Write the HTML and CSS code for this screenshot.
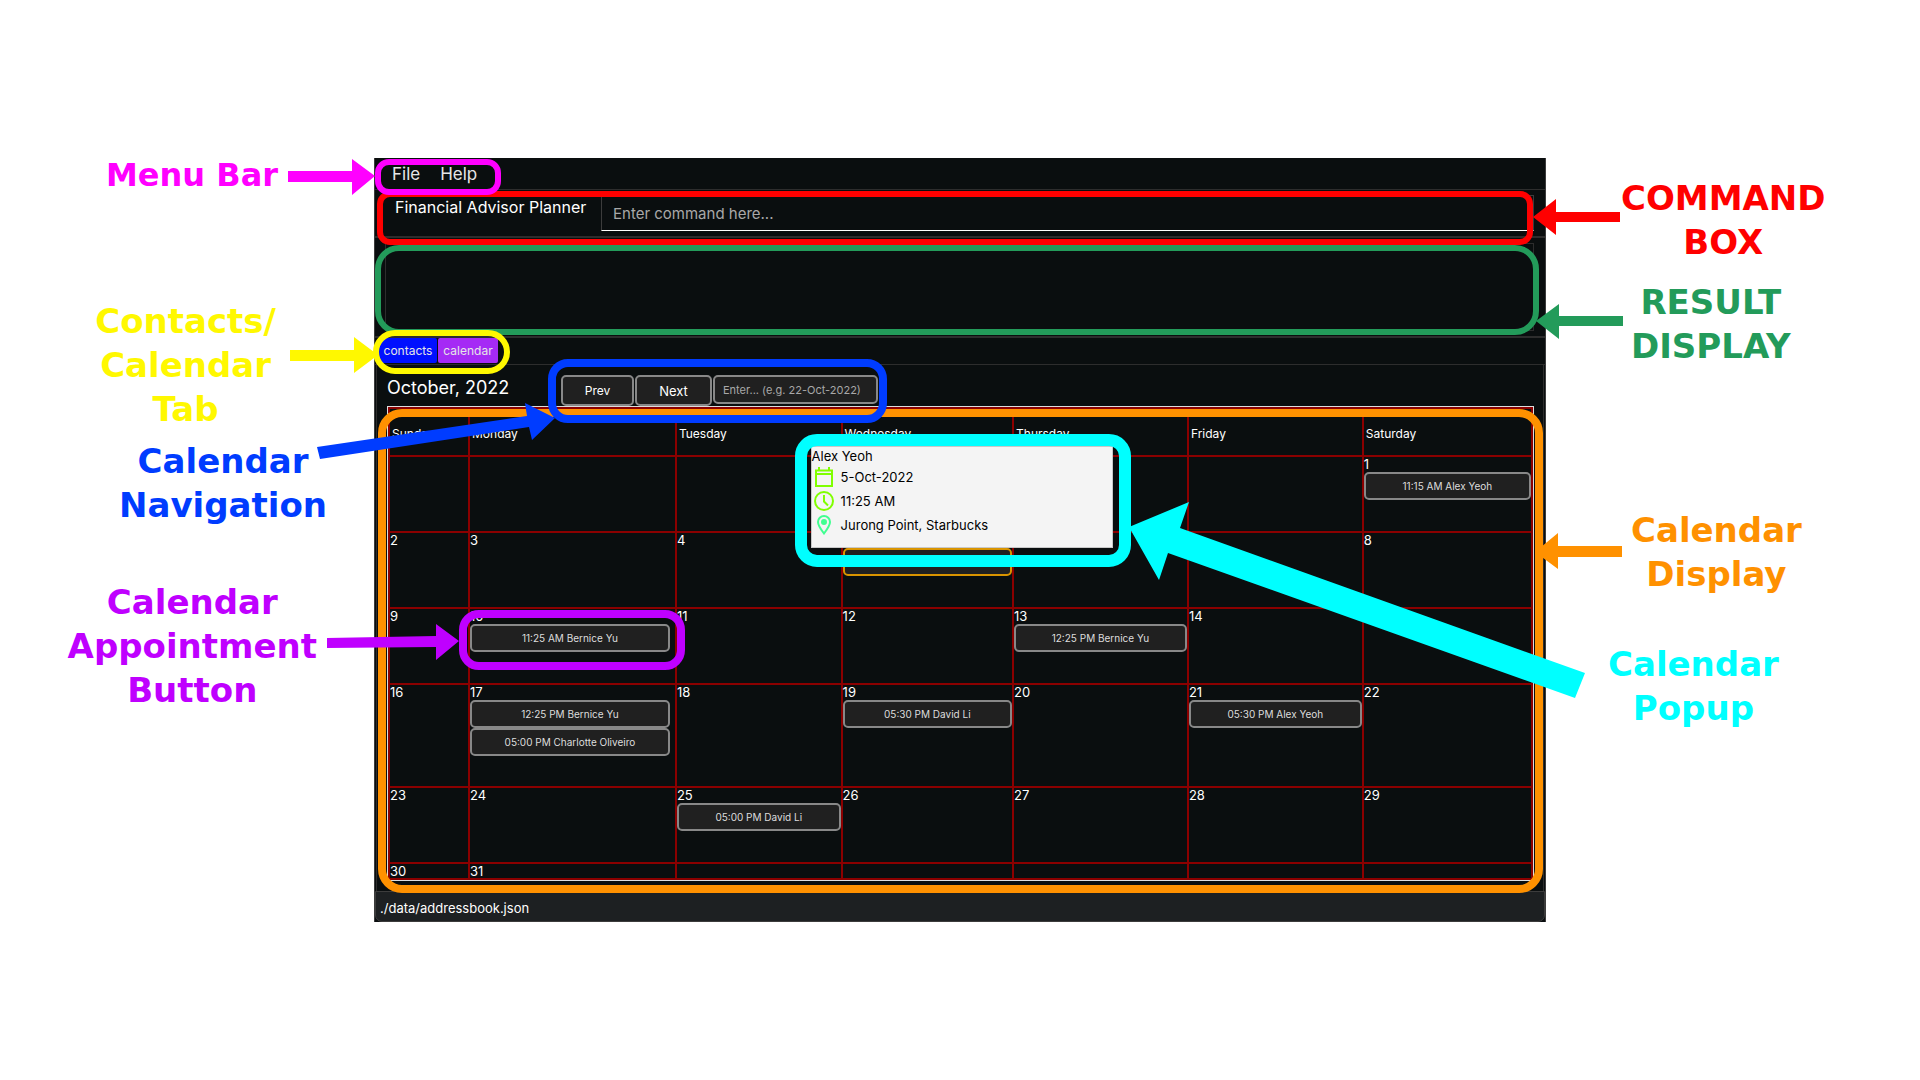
FILE: index.html
```html
<!DOCTYPE html>
<html lang="en">
<head>
<meta charset="utf-8">
<title>Financial Advisor Planner</title>
<link rel="stylesheet" href="styles.css">
</head>
<body>
<div class="guide">
  <aside class="notes notes-left">
    <p class="note menu-note">Menu Bar</p>
    <p class="note tab-note">Contacts/<br>Calendar<br>Tab</p>
    <p class="note nav-note">Calendar<br>Navigation</p>
    <p class="note appt-note">Calendar<br>Appointment<br>Button</p>
  </aside>

  <main class="window">
    <nav class="menubar">
      <div class="menus">
        <button type="button">File</button>
        <button type="button">Help</button>
        <span class="ring menu-ring"></span>
      </div>
    </nav>
    <form class="command">
      <label for="command">Financial Advisor Planner</label>
      <input id="command" type="text" placeholder="Enter command here...">
      <span class="ring command-ring"></span>
    </form>
    <section class="result">
      <output class="result-box"></output>
      <span class="ring result-ring"></span>
    </section>
    <div class="tabs">
      <button type="button" class="tab contacts">contacts</button>
      <button type="button" class="tab calendar">calendar</button>
      <span class="ring tab-ring"></span>
    </div>
    <section class="pane">
      <header class="month">
        <h1>October, 2022</h1>
        <div class="nav">
          <button type="button" class="prev">Prev</button>
          <button type="button" class="next">Next</button>
          <input type="text" aria-label="Go to date" placeholder="Enter... (e.g. 22-Oct-2022)">
          <span class="ring nav-ring"></span>
        </div>
      </header>
      <div class="board">
        <table>
          <colgroup><col class="sun"><col class="mon"><col class="tue"><col class="wed"><col class="thu"><col class="fri"><col class="sat"></colgroup>
          <thead>
            <tr><th>Sunday</th><th>Monday</th><th>Tuesday</th><th>Wednesday</th><th>Thursday</th><th>Friday</th><th>Saturday</th></tr>
          </thead>
          <tbody>
            <tr class="week"><td></td><td></td><td></td><td></td><td></td><td></td><td>1<button type="button" class="appt">11:15 AM Alex Yeoh</button></td></tr>
            <tr class="week"><td>2</td><td>3</td><td>4</td>
              <td class="selected">5<button type="button" class="appt active" aria-label="Alex Yeoh appointment"></button>
                <div class="popup">
                  <div class="who">Alex Yeoh</div>
                  <div class="detail"><svg viewBox="0 0 20 20" stroke="#80ff00"><path d="M2 3.5h16V19H2zM2 7h16M5 0v4M15 0v4"/></svg>5-Oct-2022</div>
                  <div class="detail"><svg viewBox="0 0 20 20" stroke="#80ff00"><circle cx="10" cy="10" r="9"/><path d="M10 4v6.500l4 4"/></svg>11:25 AM</div>
                  <div class="detail"><svg viewBox="0 0 20 20" stroke="#40ff90"><path d="M10 18.500C6.500 14 4 10.500 4 7a6 6 0 0 1 12 0c0 3.500-2.500 7-6 11.500z"/><circle cx="10" cy="7" r="2" fill="#40ff90"/></svg>Jurong Point, Starbucks</div>
                  <span class="ring popup-ring"></span>
                </div>
              </td>
              <td>6</td><td>7</td><td>8</td></tr>
            <tr class="week"><td>9</td><td>10<div class="slot"><button type="button" class="appt">11:25 AM Bernice Yu</button><span class="ring appt-ring"></span></div></td><td>11</td><td>12</td><td>13<button type="button" class="appt">12:25 PM Bernice Yu</button></td><td>14</td><td>15</td></tr>
            <tr class="week tall"><td>16</td><td>17<div class="slot"><button type="button" class="appt">12:25 PM Bernice Yu</button><button type="button" class="appt">05:00 PM Charlotte Oliveiro</button></div></td><td>18</td><td>19<button type="button" class="appt">05:30 PM David Li</button></td><td>20</td><td>21<button type="button" class="appt">05:30 PM Alex Yeoh</button></td><td>22</td></tr>
            <tr class="week"><td>23</td><td>24</td><td>25<button type="button" class="appt">05:00 PM David Li</button></td><td>26</td><td>27</td><td>28</td><td>29</td></tr>
            <tr class="last"><td>30</td><td>31</td><td></td><td></td><td></td><td></td><td></td></tr>
          </tbody>
        </table>
        <span class="ring board-ring"></span>
      </div>
    </section>
    <footer class="status">./data/addressbook.json</footer>
  </main>

  <aside class="notes notes-right">
    <p class="note command-note">COMMAND<br>BOX</p>
    <p class="note result-note">RESULT<br>DISPLAY</p>
    <p class="note display-note">Calendar<br>Display</p>
    <p class="note popup-note">Calendar<br>Popup</p>
  </aside>

  <svg class="arrows arrows-left" viewBox="0 0 560 730" aria-hidden="true">
    <path fill="#ff00ff" d="M288 171H352V159L375 176L352 195V182H288z"/>
    <path fill="#fff800" d="M290 350H354V337L378 355L354 373V361H290z"/>
    <path fill="#003cff" d="M317 447L527 416L525 403L555 418L532 440L529 427L320 459z"/>
    <path fill="#bf00ff" d="M327 638L436 636V624L459 641L436 660V647L327 648z"/>
  </svg>
  <svg class="arrows arrows-right" viewBox="1120 0 800 730" aria-hidden="true">
    <path fill="#ff0000" d="M1620 212H1556V199L1533 217L1556 235V222H1620z"/>
    <path fill="#239b5a" d="M1623 316H1559V304L1536 321L1559 339V326H1623z"/>
    <path fill="#ff9100" d="M1622 546H1558V533L1535 552L1558 569V557H1622z"/>
    <path fill="#00ffff" d="M1129 527L1189 502L1180 528L1585 673L1575 698L1168 553L1159 580z"/>
  </svg>
</div>
</body>
</html>
```
FILE: styles.css
```css
* { box-sizing: border-box; }
body { margin: 0; background: #fff; font-family: Inter, "Liberation Sans", sans-serif; }
button, input { font-family: inherit; margin: 0; }

.guide {
  position: relative;
  display: grid;
  grid-template-columns: 374px 1fr 374px;
  align-items: start;
  min-height: 100vh;
}

/* Callout labels */
.notes { display: flex; flex-direction: column; }
.notes-left { align-items: flex-end; padding-top: 153px; }
.notes-right { align-items: flex-start; padding-top: 176px; }
.note {
  margin: 0;
  font: bold 34px/44px "DejaVu Sans", Verdana, sans-serif;
  text-align: center;
  white-space: nowrap;
}
.menu-note { color: #ff00ff; margin-right: 96px; font-size: 32px; }
.tab-note { color: #fff800; margin: 102px 98px 0 0; }
.nav-note { color: #003cff; margin: 8px 47px 0 0; }
.appt-note { color: #bf00ff; margin: 53px 57px 0 0; }
.command-note { color: #ff0000; margin-left: 75px; }
.result-note { color: #239b5a; margin: 16px 0 0 85px; }
.display-note { color: #ff9100; margin: 140px 0 0 85px; }
.popup-note { color: #00ffff; margin: 46px 0 0 62px; }

.arrows { position: absolute; top: 0; height: 730px; z-index: 10; pointer-events: none; }
.arrows-left { left: 0; width: 560px; }
.arrows-right { right: 0; width: 800px; }

/* Highlight rings */
.ring { position: absolute; border: 6px solid; pointer-events: none; }
.menu-ring { color: #ff00ff; inset: 1px auto auto 0; width: 126px; height: 36px; border-radius: 14px; z-index: 3; }
.command-ring { color: #ff0000; inset: 1px 12px -9px 2px; border-radius: 13px; z-index: 1; }
.result-ring { color: #239b5a; inset: 7px 6px 1px 0; border-radius: 24px; z-index: 2; }
.tab-ring { color: #fff800; top: -8px; left: -2px; width: 137px; height: 44px; border-radius: 22px; z-index: 3; }
.nav-ring { color: #003cff; inset: -16px -9px -17px -13px; border-width: 8px; border-radius: 20px; z-index: 3; }
.board-ring { color: #ff9100; inset: 2px -10px -13px -10px; border-width: 8px; border-radius: 24px; z-index: 2; }
.popup-ring { color: #00ffff; inset: -13px -19px -20px -17px; border-width: 12px; border-radius: 22px; }
.appt-ring { color: #bf00ff; inset: -14px -15px -18px -11px; border-width: 8px; border-radius: 20px; z-index: 3; }

/* Application window */
.window {
  margin-top: 158px;
  background: #0a0e0f;
  color: #fff;
  border: solid #3c3c3c;
  border-width: 0 1px;
}
.menubar { border-bottom: 1px solid #2d2d2d; }
.menus { position: relative; display: flex; gap: 20px; height: 31px; padding: 0 17px; }
.menus button { border: 0; padding: 0; background: none; color: #e6e6e6; font-size: 17px; line-height: 32px; }

.command {
  position: relative;
  display: flex;
  align-items: flex-start;
  gap: 10px;
  height: 48px;
  padding: 5px 11px 0 20px;
  border-bottom: 2px solid #2d2d2d;
}
.command label { font-size: 16px; line-height: 24px; width: 196px; white-space: nowrap; }
.command input {
  flex: 1;
  height: 36px;
  padding: 0 11px;
  border: 1px solid #3c3c3c;
  border-bottom-color: #fff;
  background: none;
  color: #fff;
  font-size: 15px;
}
.command input::placeholder { color: #a8a8a8; }

.result { position: relative; padding: 5px 11px 5px 10px; border-bottom: 2px solid #2d2d2d; }
.result-box { display: block; height: 88px; border: 1px solid #2d2d2d; }

.tabs { position: relative; display: flex; gap: 1px; padding: 0 4px 1px; border-bottom: 1px solid #2d2d2d; }
.tab { border: 0; padding: 0 2px; width: 58px; height: 25px; border-radius: 2px; color: #e6e6e6; font-size: 12px; }
.contacts { background: #0010ff; }
.calendar { background: #a52af5; width: 60px; }

.pane { padding: 10px 9px 10px 10px; margin: 0 1px; border: solid #2d2d2d; border-width: 0 1px; }
.month { display: flex; height: 31px; }
.month h1 { margin: 0; width: 174px; font-size: 18px; font-weight: 400; line-height: 25px; white-space: nowrap; }
.nav { position: relative; display: flex; align-items: flex-start; gap: 1px; }
.nav button, .nav input, .appt { border: 2px solid #888; border-radius: 5px; background: #202020; color: #fff; }
.nav button { height: 31px; padding: 0; font-size: 12px; }
.prev { width: 73px; }
.nav .next { width: 77px; font-size: 13px; }
.nav input { width: 165px; height: 29px; padding: 0 8px; font-size: 11px; }
.nav input::placeholder { color: #a8a8a8; }

/* Month grid */
.board { position: relative; border: 1px solid #ddd; }
table { width: 100%; table-layout: fixed; border-collapse: collapse; font-size: 13px; }
.sun { width: 7%; }
.mon { width: 18.1%; }
.tue { width: 14.5%; }
.wed { width: 15%; }
.thu, .fri { width: 15.3%; }
th, td { border: 2px solid #8b0000; padding: 0; text-align: left; vertical-align: top; line-height: 15px; }
th { height: 48px; padding: 2px 0 0 2px; vertical-align: middle; font-size: 12px; font-weight: 400; }
.week { height: 76px; }
.tall { height: 103px; }
.last { height: 16px; }
.last td { line-height: 14px; }
.selected, .slot { position: relative; }
.slot { width: calc(100% - 5px); }
.appt { display: block; width: 100%; height: 28px; padding: 0; color: #ddd; font-size: 10px; }
.active { border-color: #d99400; }

.popup {
  position: absolute;
  z-index: 4;
  top: -87px;
  left: -32px;
  width: 302px;
  height: 102px;
  border: 1px solid #c8c8c8;
  background: #f4f4f4;
  color: #000;
  font-size: 13px;
}
.who { line-height: 18px; }
.detail { display: flex; align-items: center; gap: 7px; height: 24px; padding-left: 2px; }
.detail svg { width: 20px; height: 20px; fill: none; stroke-width: 2; }

.status {
  height: 31px;
  padding-left: 4px;
  border: 1px solid #3c3c3c;
  border-radius: 0 0 7px 7px;
  background: #1d2022;
  font-size: 13px;
  line-height: 32px;
}
```
